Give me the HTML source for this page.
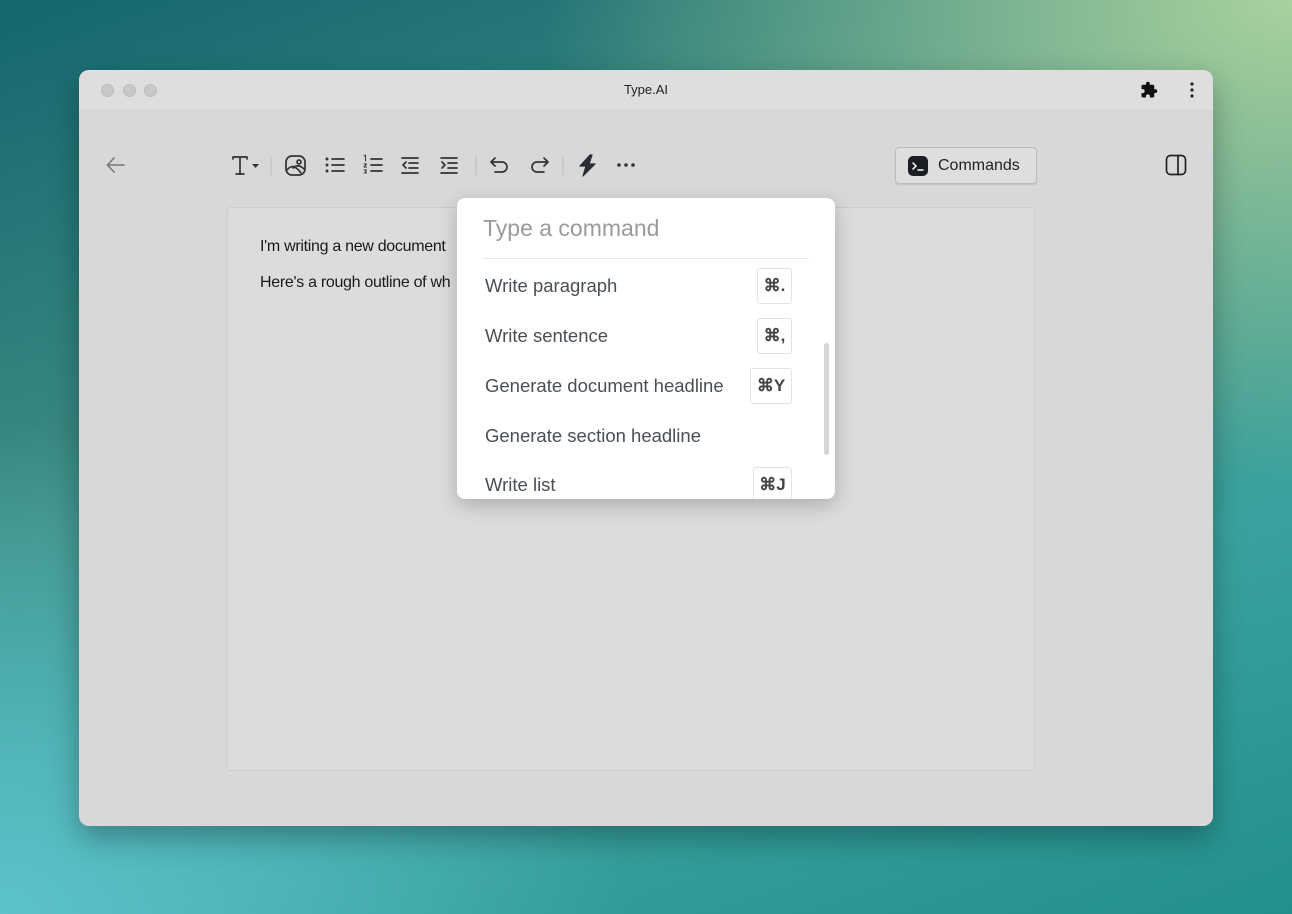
<!DOCTYPE html>
<html><head><meta charset="utf-8"><style>
*{box-sizing:border-box;margin:0;padding:0}
body{width:1292px;height:914px;overflow:hidden;font-family:"Liberation Sans",sans-serif;position:relative;
background:
radial-gradient(ellipse 900px 700px at 0% 100%,#5cc3cc 0%,rgba(92,195,204,0) 70%),
radial-gradient(ellipse 1000px 650px at 100% 0%,#a9d29e 0%,rgba(169,210,158,0) 75%),
linear-gradient(160deg,#14666f 0%,#3f8f84 40%,#3aa29e 70%,#22908d 100%);}
.win{position:absolute;left:79px;top:70px;width:1134px;height:756px;border-radius:10px;background:#d8d8d8;box-shadow:0 12px 30px rgba(0,0,0,.3);overflow:hidden}
.tb{height:41px;background:#dedede;border-bottom:1px solid #d2d2d2;position:relative}
.dot{position:absolute;top:14px;width:13px;height:13px;border-radius:50%;background:#c8c8c8;border:1px solid #bcbcbc}
.title{position:absolute;left:0;right:0;top:12px;text-align:center;font-size:13px;color:#222}
.ic{position:absolute}
.page{position:absolute;left:148px;top:137px;width:808px;height:564px;background:#dcdcdc;border:1px solid #cdcdcd;border-radius:3px}
.txt{position:absolute;left:32px;font-size:16px;color:#1a1a1a;letter-spacing:-.3px}
.cmdbtn{position:absolute;left:816px;top:77px;width:142px;height:37px;border:1px solid #bdbdbd;border-radius:4px;background:#dedede;box-shadow:0 1px 1px rgba(0,0,0,.1)}
.cmdbtn span{position:absolute;left:42px;top:9px;font-size:16px;color:#222}
.pop{position:absolute;left:457px;top:198px;width:378px;height:301px;background:#fff;border-radius:8px;box-shadow:0 6px 20px rgba(0,0,0,.22);overflow:hidden}
.ph{position:absolute;left:26px;top:17px;font-size:23px;color:#9a9a9a}
.hr{position:absolute;left:26px;right:26px;top:60px;border-top:1px solid #e6e6e6}
.it{position:absolute;left:28px;font-size:18.5px;color:#4a4f55}
.k{position:absolute;height:36px;border:1px solid #e3e3e3;border-radius:3px;font-size:17px;color:#444;text-align:center;line-height:34px;font-weight:bold}
.sb{position:absolute;left:367px;top:145px;width:5px;height:112px;border-radius:3px;background:#d6d6d6}
</style></head><body>
<div class="win">
 <div class="tb">
  <div class="dot" style="left:22px"></div><div class="dot" style="left:44px"></div><div class="dot" style="left:65px"></div>
  <div class="title">Type.AI</div>
  <svg class="ic" style="left:1061px;top:11px" width="18" height="18" viewBox="0 0 24 24"><path fill="#111" d="M20.5 11H19V7a2 2 0 0 0-2-2h-4V3.5a2.5 2.5 0 0 0-5 0V5H4a2 2 0 0 0-2 2v3.8h1.5a2.7 2.7 0 0 1 0 5.4H2V20a2 2 0 0 0 2 2h3.8v-1.5a2.7 2.7 0 0 1 5.4 0V22H17a2 2 0 0 0 2-2v-4h1.5a2.5 2.5 0 0 0 0-5z"/></svg>
  <svg class="ic" style="left:1106px;top:11px" width="14" height="18" viewBox="0 0 14 18"><circle cx="7" cy="3" r="1.6" fill="#222"/><circle cx="7" cy="9" r="1.6" fill="#222"/><circle cx="7" cy="15" r="1.6" fill="#222"/></svg>
 </div>
 <svg class="ic" style="left:26px;top:85px" width="22" height="20" viewBox="0 0 22 20" fill="none" stroke="#777" stroke-width="1.6" stroke-linecap="round"><path d="M19 10H3M9 3L2.5 10 9 17"/></svg>
 <svg class="ic" style="left:150px;top:83px" width="520" height="26" viewBox="0 0 520 26" fill="none" stroke="#333" stroke-width="1.7" stroke-linecap="round" stroke-linejoin="round">
  <path d="M4 6V4h14v2M11 4v17M7 21h8"/><path d="M23 11h7l-3.5 4z" fill="#333" stroke="none"/>
  <path d="M42 4v18" stroke="#bbb" stroke-width="1"/>
  <rect x="57" y="3" width="19" height="19" rx="6"/><circle cx="70" cy="9" r="2"/><path d="M58 17c4-5 8-5 14 3M64 15c3-3 7-3 11 1"/>
  <g transform="translate(7 0)"><path d="M96 6h12M96 12h12M96 18h12"/><circle cx="91" cy="6" r=".6" fill="#333"/><circle cx="91" cy="12" r=".6" fill="#333"/><circle cx="91" cy="18" r=".6" fill="#333"/></g>
  <g transform="translate(6 0)"><path d="M136 6h11M136 12h11M136 18h11" /><path d="M129 3l1.5-1v6M129 11h2.5l-2.5 3h2.5M129 17h2.5l-1 1.5 1 1.5h-2.5" stroke-width="1"/></g>
  <path d="M173 5h16M180 10h9M180 15h9M173 20h16M177 9l-3 3 3 3"/>
  <path d="M212 5h16M219 10h9M219 15h9M212 20h16M213 9l3 3-3 3"/>
  <path d="M247 4v18" stroke="#bbb" stroke-width="1"/>
  <path d="M266 5l-4 4 4 4M262 9h11a5 5 0 0 1 0 10h-7"/>
  <path d="M315 5l4 4-4 4M319 9h-11a5 5 0 0 0 0 10h7"/>
  <path d="M334 4v18" stroke="#bbb" stroke-width="1"/>
  <path d="M361 2L351 13h6l-3 10 12-12h-6l3-9z" fill="#2a2d35" stroke="#2a2d35" stroke-width="1.2"/>
  <circle cx="390" cy="12" r="1.8" fill="#333" stroke="none"/><circle cx="397" cy="12" r="1.8" fill="#333" stroke="none"/><circle cx="404" cy="12" r="1.8" fill="#333" stroke="none"/>
 </svg>
 <div class="cmdbtn"><svg class="ic" style="left:12px;top:8px" width="20" height="20" viewBox="0 0 20 20"><rect width="20" height="20" rx="5" fill="#1a1d22"/><path d="M5 7l3 3-3 3M10 14h5" stroke="#fff" stroke-width="1.5" fill="none" stroke-linecap="round"/></svg><span>Commands</span></div>
 <svg class="ic" style="left:1086px;top:84px" width="22" height="22" viewBox="0 0 22 22" fill="none" stroke="#222" stroke-width="1.7"><rect x="1.5" y="1.5" width="19" height="19" rx="4"/><path d="M13 2v18"/></svg>
 <div class="page">
  <div class="txt" style="top:30px">I'm writing a new document</div>
  <div class="txt" style="top:66px">Here's a rough outline of wh</div>
 </div>
</div>
<div class="pop">
 <div class="ph">Type a command</div><div class="hr"></div>
 <div class="it" style="top:77px">Write paragraph</div><div class="k" style="left:300px;top:70px;width:35px">⌘.</div>
 <div class="it" style="top:127px">Write sentence</div><div class="k" style="left:300px;top:120px;width:35px">⌘,</div>
 <div class="it" style="top:177px">Generate document headline</div><div class="k" style="left:293px;top:170px;width:42px">⌘Y</div>
 <div class="it" style="top:227px">Generate section headline</div>
 <div class="it" style="top:276px">Write list</div><div class="k" style="left:296px;top:269px;width:39px">⌘J</div>
 <div class="sb"></div>
</div>
</body></html>
